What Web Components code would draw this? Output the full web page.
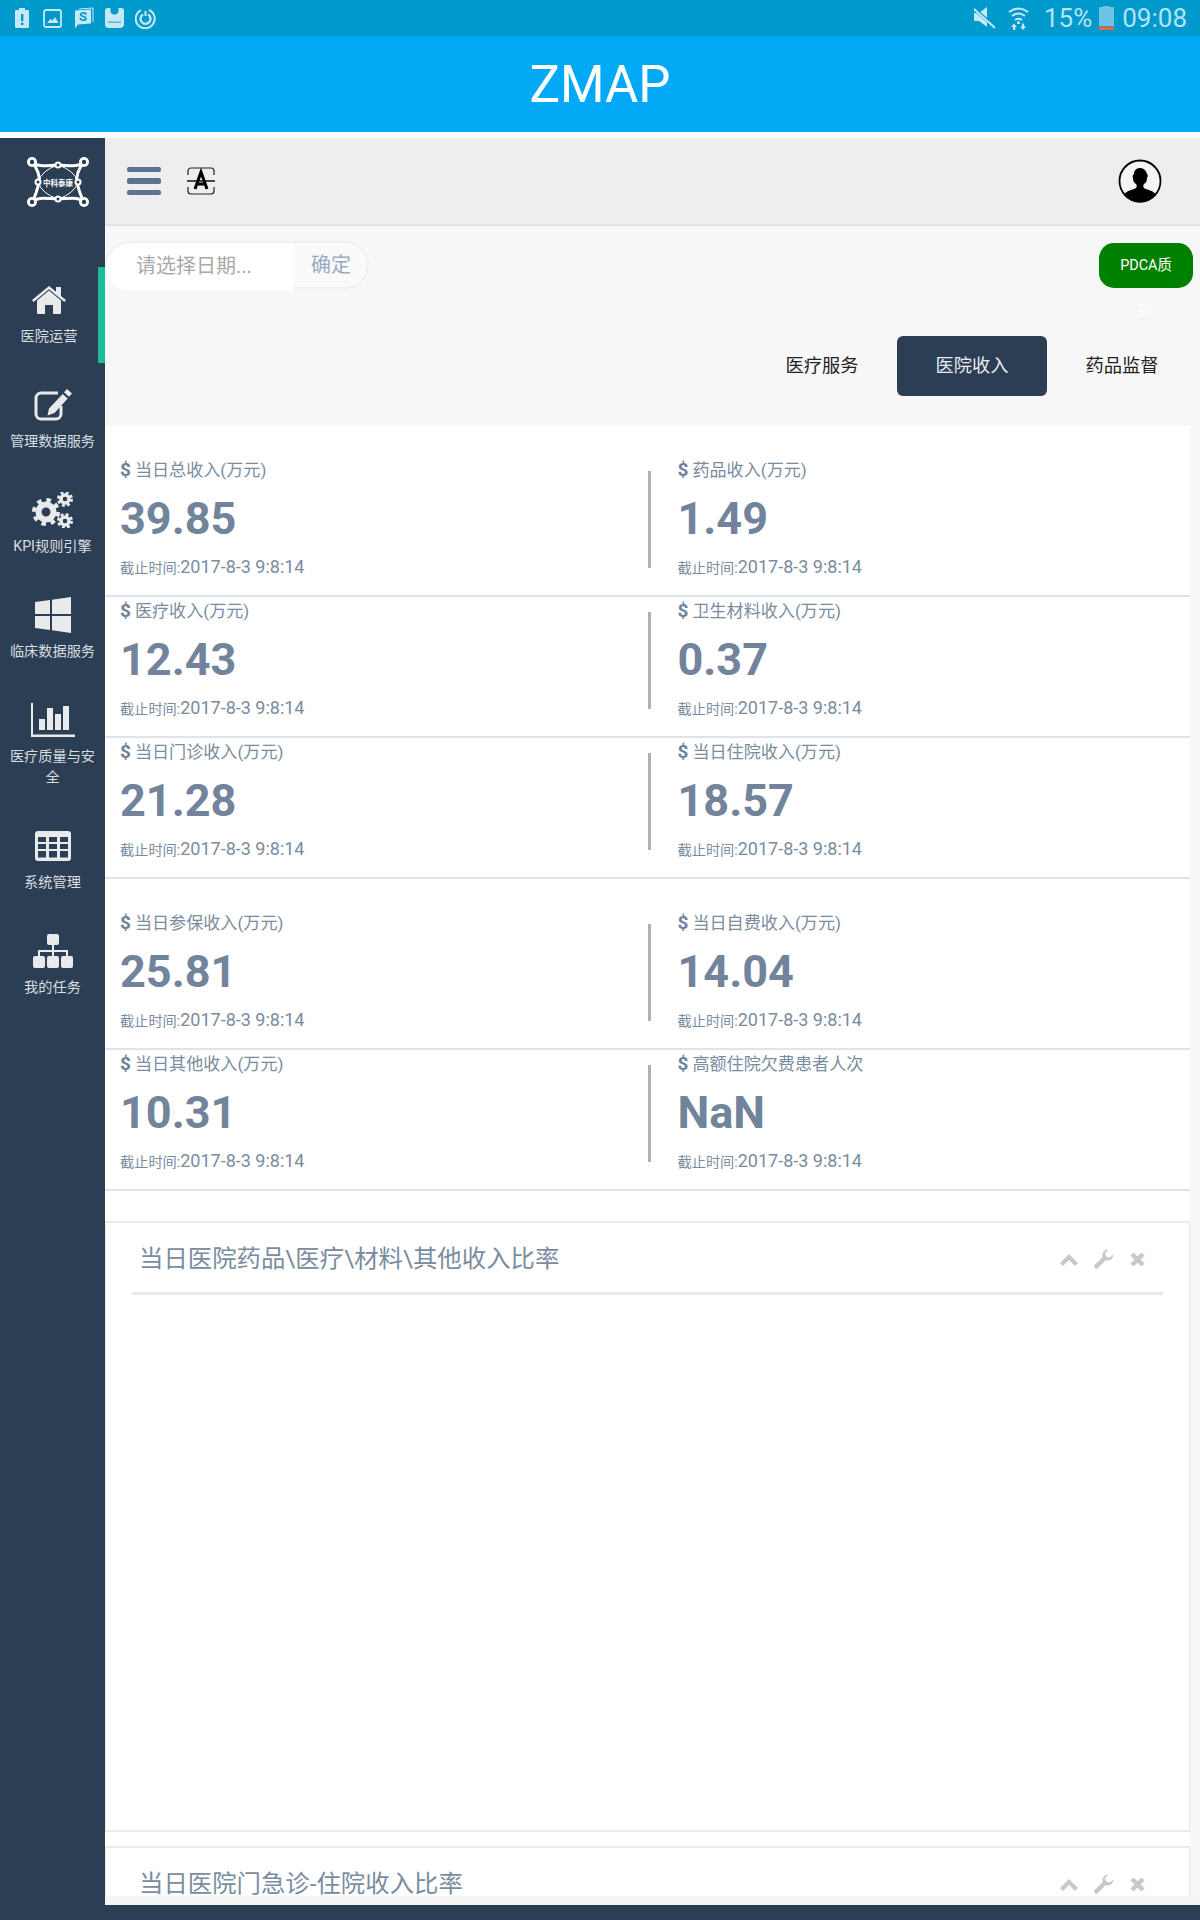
<!DOCTYPE html>
<html lang="zh"><head><meta charset="utf-8"><title>ZMAP</title>
<style>
html,body{margin:0;padding:0;background:#fff;font-family:Roboto,"Noto Sans CJK SC",sans-serif}
body{width:1200px;height:1920px;overflow:hidden;display:flex;flex-direction:column}
svg{display:block}
</style></head><body>
<status-bar></status-bar>
<app-bar>ZMAP</app-bar>
<app-shell>
  <side-nav slot="nav">
    <nav-item label="医院运营" active><svg slot="icon" width="36" height="30" viewBox="0 0 36 30" fill="#e8eaec"><path d="M6 15.5 18 5.5l12 10V28a1 1 0 0 1-1 1h-7v-9h-8v9H7a1 1 0 0 1-1-1z"/><path d="M1 15 18 1l7 5.8V2h5v9l5 4-1.600 2L18 4.200 2.600 17z"/></svg></nav-item>
    <nav-item label="管理数据服务"><svg slot="icon" width="40" height="32" viewBox="0 0 40 32" fill="none"><path d="M28 17v8a5 5 0 0 1-5 5H8a5 5 0 0 1-5-5V9a5 5 0 0 1 5-5h17" stroke="#e8eaec" stroke-width="3"/><path fill="#e8eaec" d="M34 0l5 4.500-3 3.300-5-4.500zM29.700 5l5 4.500L21.500 24l-7 2.500 1.500-7z"/></svg></nav-item>
    <nav-item label="KPI规则引擎"><svg slot="icon" width="42" height="36" viewBox="0 0 42 36" fill="none" stroke="#e8eaec"><circle cx="14" cy="20" r="7.500" stroke-width="6"/><circle cx="14" cy="20" r="12" stroke-width="4" stroke-dasharray="4.500 4.930"/><circle cx="33" cy="7" r="4" stroke-width="3.500"/><circle cx="33" cy="7" r="6.500" stroke-width="3" stroke-dasharray="2.800 2.300"/><circle cx="33" cy="29" r="4" stroke-width="3.500"/><circle cx="33" cy="29" r="6.500" stroke-width="3" stroke-dasharray="2.800 2.300"/></svg></nav-item>
    <nav-item label="临床数据服务"><svg slot="icon" width="36" height="36" viewBox="0 0 36 36" fill="#e8eaec"><path d="M0 5l15-2v14H0zM17 2.700 36 0v17H17zM0 19h15v14L0 31zM17 19h19v17l-19-2.700z"/></svg></nav-item>
    <nav-item label="医疗质量与安全"><svg slot="icon" width="44" height="34" viewBox="0 0 44 34" fill="#e8eaec"><path d="M0 0h2v31.500h42V34H0zM8 16h6v11H8zM16 5h6v22h-6zM24 11h6v16h-6zM32 3h6v24h-6z"/></svg></nav-item>
    <nav-item label="系统管理"><svg slot="icon" width="36" height="30" viewBox="0 0 36 30"><rect width="36" height="30" rx="3" fill="#e8eaec"/><path fill="#2b3e53" d="M3 6h8v5H3zM14 6h8v5h-8zM25 6h8v5h-8zM3 13h8v5H3zM14 13h8v5h-8zM25 13h8v5h-8zM3 20h8v6.500H3zM14 20h8v6.500h-8zM25 20h8v6.500h-8z"/></svg></nav-item>
    <nav-item label="我的任务"><svg slot="icon" width="40" height="34" viewBox="0 0 40 34" fill="#e8eaec"><rect x="14" y="0" width="12" height="11" rx="2"/><rect x="0" y="22" width="12" height="12" rx="2"/><rect x="14" y="22" width="12" height="12" rx="2"/><rect x="28" y="22" width="12" height="12" rx="2"/><path d="M19 11h2v5h14v6h-2v-4H21v4h-2v-4H7v4H5v-6h14z"/></svg></nav-item>
  </side-nav>
  <top-bar></top-bar>
  <filter-bar></filter-bar>
  <tab-bar></tab-bar>
  <stat-row spaced>
    <stat-cell label="当日总收入(万元)" value="39.85"></stat-cell>
    <stat-cell divided label="药品收入(万元)" value="1.49"></stat-cell>
  </stat-row>
  <stat-row>
    <stat-cell label="医疗收入(万元)" value="12.43"></stat-cell>
    <stat-cell divided label="卫生材料收入(万元)" value="0.37"></stat-cell>
  </stat-row>
  <stat-row>
    <stat-cell label="当日门诊收入(万元)" value="21.28"></stat-cell>
    <stat-cell divided label="当日住院收入(万元)" value="18.57"></stat-cell>
  </stat-row>
  <stat-row spaced>
    <stat-cell label="当日参保收入(万元)" value="25.81"></stat-cell>
    <stat-cell divided label="当日自费收入(万元)" value="14.04"></stat-cell>
  </stat-row>
  <stat-row>
    <stat-cell label="当日其他收入(万元)" value="10.31"></stat-cell>
    <stat-cell divided label="高额住院欠费患者人次" value="NaN"></stat-cell>
  </stat-row>
  <chart-panel title-text="当日医院药品\医疗\材料\其他收入比率"></chart-panel>
  <chart-panel second title-text="当日医院门急诊-住院收入比率"></chart-panel>
</app-shell>
<script>
function def(name, css, html, setup){
  customElements.define(name, class extends HTMLElement{
    constructor(){super();const r=this.attachShadow({mode:'open'});
      r.innerHTML='<style>'+css+'</style>'+(typeof html==='function'?html(this):html);}
    connectedCallback(){const r=this.shadowRoot;
      if(typeof html==='function'){const s=r.querySelector('style').outerHTML;r.innerHTML=s+html(this);}
      if(setup)setup(this);}
  });
}
const FONT='Roboto,"Noto Sans CJK SC",sans-serif';
def('status-bar',`:host{display:flex;align-items:center;height:36px;background:#0099cc;flex:none;color:#b4e3f3;font:26px ${FONT}}
 .l{display:flex;margin-left:15px;align-items:center}.r{margin-left:auto;display:flex;align-items:center;margin-right:13px}
 svg{display:block;flex:none}span{line-height:36px}`,
`<div class="l">
<svg width="14" height="20" viewBox="0 0 14 20"><path fill="#c4e9f5" d="M4 0h6v2h3a1 1 0 0 1 1 1v16a1 1 0 0 1-1 1H1a1 1 0 0 1-1-1V3a1 1 0 0 1 1-1h3z"/><path fill="#0099cc" d="M6 6h2.400v7H6zM6 14.500h2.400V17H6z"/></svg>
<svg style="margin-left:14px" width="19" height="19" viewBox="0 0 19 19"><rect x="1" y="1" width="17" height="17" rx="2" fill="none" stroke="#c4e9f5" stroke-width="1.800"/><path fill="#c4e9f5" d="M4 14l3.500-4 2 1.500L12 8l3.500 6z"/></svg>
<svg style="margin-left:12px" width="20" height="22" viewBox="0 0 20 22"><path fill="none" stroke="#c4e9f5" d="M5 2 19 1v14"/><path fill="#c4e9f5" d="M1 3.500 17 2.500V16.500L4 17.500 1 21.500z"/><text x="5" y="14" font-family="Roboto" font-weight="700" font-size="13" fill="#0099cc">S</text></svg>
<svg style="margin-left:11px" width="19" height="20" viewBox="0 0 19 20"><path fill="#c4e9f5" d="M3 0h2.500v2.500a4 4 0 0 0 8 0V0H16a3 3 0 0 1 3 3v13a4 4 0 0 1-4 4H4a4 4 0 0 1-4-4V3a3 3 0 0 1 3-3z"/><path fill="#0099cc" d="M3 13.500h13v1.500H3z" opacity=".6"/></svg>
<svg style="margin-left:11px" width="21" height="21" viewBox="0 0 21 21" fill="none" stroke="#c4e9f5"><path stroke-width="2" d="M14 2A9.500 9.500 0 1 1 6 2.200"/><path stroke-width="2.400" d="M8 6.500a5 5 0 1 0 5 0"/><path stroke-width="2" d="M10.500 3v5"/></svg>
</div><div class="r">
<svg width="23" height="22" viewBox="0 0 23 22"><path fill="#c4e9f5" d="M1 6h5l8-6v20l-8-6H1z"/><path stroke="#0099cc" stroke-width="3.500" d="M0 1l22 19"/><path stroke="#c4e9f5" stroke-width="2" d="M1 2l21 19"/></svg>
<svg style="margin-left:12px" width="21" height="24" viewBox="0 0 21 24" fill="none" stroke="#c4e9f5" stroke-width="2"><path d="M1 6q9.500-7 19 0M4 10q6.500-5 13 0M7 14q3.500-2.500 7 0"/><path fill="#c4e9f5" stroke="none" d="M9 15.500h3V18H9zM6 17.500 9 21H7.200v3H5v-3H3.200zM15 24l3-3.500h-1.800v-3H14v3h-1.800z"/></svg>
<span style="margin-left:15px">15%</span>
<svg style="margin-left:7px" width="15" height="24" viewBox="0 0 15 24"><path fill="#6ec3e4" d="M4 0h7v1h3a1 1 0 0 1 1 1v18H0V2a1 1 0 0 1 1-1h3z"/><path fill="#dc6a4a" d="M0 20.500h15V24H0z"/></svg>
<span style="margin-left:8px">09:08</span></div>`);
def('app-bar',`:host{display:block;height:96px;background:#03a9f5;flex:none;color:#fff;font:400 51px/98px ${FONT};text-align:center;margin-bottom:6px}`,`<slot></slot>`);
def('app-shell',`:host{display:flex;flex:1;background:#2b3e53;min-height:0}
 main{width:1095px;height:1767px;background:#f5f5f5;overflow:hidden;flex:none}
 .clip{height:1758px;overflow:hidden;background:#f7f7f7}`,
 `<slot name="nav"></slot><main><div class="clip"><slot></slot></div></main>`);
def('side-nav',`:host{display:flex;flex-direction:column;width:105px;flex:none}
 .logo{height:129px;display:flex;padding:19px 0 0 27px;box-sizing:border-box}`,
 `<div class="logo"><svg width="62" height="50" viewBox="0 0 62 50"><g fill="none" stroke="#fff" stroke-linecap="round"><path stroke-width="3" d="M5 5C11 11 21 8 31 8S51 11 57 5M5 45C11 39 21 42 31 42S51 39 57 45M5 5C11 12 13 20 12 25S9 38 5 45M57 5C51 12 49 20 50 25S53 38 57 45"/><path stroke-width="1" d="M31 8Q15 13 11 25Q15 37 31 42Q47 37 51 25Q47 13 31 8z"/></g><g fill="#fff"><circle cx="5" cy="5" r="5"/><circle cx="57" cy="5" r="5"/><circle cx="5" cy="45" r="5"/><circle cx="57" cy="45" r="5"/><circle cx="31" cy="8" r="3.500"/><circle cx="31" cy="42" r="3.500"/><circle cx="11" cy="25" r="3.500"/><circle cx="51" cy="25" r="3.500"/></g><g fill="#2b3e53"><circle cx="5" cy="5" r="2.200"/><circle cx="57" cy="5" r="2.200"/><circle cx="5" cy="45" r="2.200"/><circle cx="57" cy="45" r="2.200"/><circle cx="31" cy="8" r="1.500"/><circle cx="31" cy="42" r="1.500"/><circle cx="11" cy="25" r="1.500"/><circle cx="51" cy="25" r="1.500"/></g><rect x="16" y="21" width="30" height="9" fill="#2b3e53"/><text x="31" y="28.500" text-anchor="middle" font-family="Noto Sans CJK SC" font-size="7.500" font-weight="700" fill="#fff">中科泰康</text></svg></div><slot></slot>`);
def('nav-item',`:host{display:block;box-sizing:border-box;padding-bottom:16px;margin-bottom:9px;color:#d8dde0;text-align:center;font:14.200px/21px ${FONT}}
 :host([active]){border-right:7px solid #1abc9c}
 .i{height:46px;padding:10px 0 3px;display:flex;justify-content:center;align-items:center}
 .t{padding:0 8px;width:100%;box-sizing:border-box}`,
 el=>`<div class="i"><slot name="icon"></slot></div><div class="t">${el.getAttribute('label')}</div>`);
def('top-bar',`:host{display:flex;align-items:center;height:88px;box-sizing:border-box;background:#eee;border-bottom:2px solid #dfe3ea;padding:0 38px 0 22px}
 .h{display:flex;flex-direction:column;gap:6px;width:34px}.h i{display:block;height:5.500px;border-radius:2px;background:#5b7391}
 svg{display:block}.a{margin-left:25px}.u{margin-left:auto}`,
 `<div class="h"><i></i><i></i><i></i></div>
 <svg class="a" width="30" height="30" viewBox="0 0 30 30" fill="none"><path stroke="#222" stroke-width="1.200" d="M2 9V5a3 3 0 0 1 3-3h20a3 3 0 0 1 3 3v4M2 21v4a3 3 0 0 0 3 3h20a3 3 0 0 0 3-3v-4"/><path stroke="#000" stroke-width="1.400" d="M1 15h28"/><path stroke="#000" stroke-width="3" d="M9 23 15 6l6 17M11 18h8"/></svg>
 <svg class="u" width="44" height="44" viewBox="0 0 44 44"><circle cx="22" cy="22" r="20.500" fill="#f4f4f4" stroke="#000" stroke-width="1.800"/><path d="M6 36c3-5 9-5 12-7 1-1 1-3 0-4-2-1-3-3-3-6-1-2 0-3 1-4 0-4 3-6 6-6s6 2 7 6c1 1 1 2 0 4 0 3-1 5-3 6-1 1-1 3 0 4 3 2 9 2 12 7a21 21 0 0 1-32 0z"/></svg>`);
def('filter-bar',`:host{display:flex;height:110px;box-sizing:border-box;padding-top:15px;position:relative;font:20px ${FONT}}
 .g{display:flex;height:50px}.in{width:188px;background:#fff;border-radius:25px 0 0 25px;color:#a9a9a9;line-height:50px;padding-left:31px;box-sizing:border-box;box-shadow:inset 1px 2px 0 #f0f0f0}
 .b{width:76px;height:48px;border:2px solid #eef0f3;border-left:0;border-radius:0 25px 25px 0;color:#9aabc0;line-height:44px;padding-left:18px;box-sizing:border-box;background:#fafafa}
 .p{position:absolute;left:994px;top:17px;width:94px;height:45px;background:#008000;border-radius:15px;color:#fff;font-size:14.400px;line-height:45px;text-align:center;padding:0 20px;box-sizing:border-box}`,
 `<div class="g"><div class="in">请选择日期...</div><div class="b">确定</div></div><div class="p">PDCA质控</div>`);
def('tab-bar',`:host{display:flex;justify-content:flex-end;padding-right:3px;height:90px;box-sizing:border-box;font:18.300px/60px ${FONT}}
 div{width:150px;height:60px;text-align:center;color:#222}
 .on{background:#2b3e53;color:#e9edf0;border-radius:6px}`,
 `<div>医疗服务</div><div class="on">医院收入</div><div>药品监督</div>`);
def('stat-row',`:host{display:flex;width:1085px;box-sizing:border-box;background:#fff;border-bottom:2px solid #e0e4ea;height:141px}
 :host([spaced]){padding-top:30px;height:171px}`,`<slot></slot>`);
def('stat-cell',`:host{display:flex;width:542.500px;box-sizing:border-box;padding-left:15px;color:#7a8ca0}
 :host([divided]){padding-left:0}
 .d{width:3px;height:97px;margin:15px 27px 0 0;background:#aab3b8;flex:none}
 .l{font-size:17.100px;line-height:28px;height:28px;white-space:nowrap}.l b{font:700 19px/28px ${FONT};color:#6f8299;margin-right:4px}
 .v{font:700 45px/48px ${FONT};color:#71849b;margin-top:11px}
 .s{margin-top:12px;font-size:14.200px;line-height:24px;white-space:nowrap}.s span{font-size:18px}`,
 el=>`${el.hasAttribute('divided')?'<div class="d"></div>':''}<div><div class="l"><b>$</b>${el.getAttribute('label')}</div><div class="v">${el.getAttribute('value')}</div><div class="s">截止时间:<span>2017-8-3 9:8:14</span></div></div>`);
def('chart-panel',`:host{display:block;width:1085px;box-sizing:border-box;background:#fff;padding-top:30px}
 :host([second]){padding-top:14px}
 .p{border:1px solid #e7eaec;border-top-width:2px;border-bottom-width:2px;height:611px;box-sizing:border-box;padding:0 26px}
 :host([second]) .p{height:300px}
 .h{display:flex;align-items:center;height:72px;border-bottom:3px solid #e7eaec;color:#7a8ca0;font:24.400px ${FONT};padding:0 0 3px 7px;box-sizing:border-box}
 .ic{margin-left:auto;display:flex;gap:16px;align-items:center;margin-right:18px;margin-top:6px}`,
 el=>`<div class="p"><div class="h"><span>${el.getAttribute('title-text')}</span><div class="ic">
 <svg width="18" height="13" viewBox="0 0 18 13"><path fill="none" stroke="#c8c8c8" stroke-width="4.200" d="M1.500 11.500 9 4l7.500 7.500"/></svg>
 <svg width="20" height="20" viewBox="0 0 20 20"><path fill="#c8c8c8" d="M19.500 5.500a6 6 0 0 1-8 5.700L4 19a2.200 2.200 0 0 1-3.200-3.200l7.800-7.500A6 6 0 0 1 14.500.500l-3.500 3.500 1 3.500 3.500 1z"/></svg>
 <svg width="15" height="15" viewBox="0 0 15 15"><path stroke="#c8c8c8" stroke-width="4.500" d="M2 2l11 11M13 2 2 13"/></svg></div></div></div>`);
</script>
</body></html>
